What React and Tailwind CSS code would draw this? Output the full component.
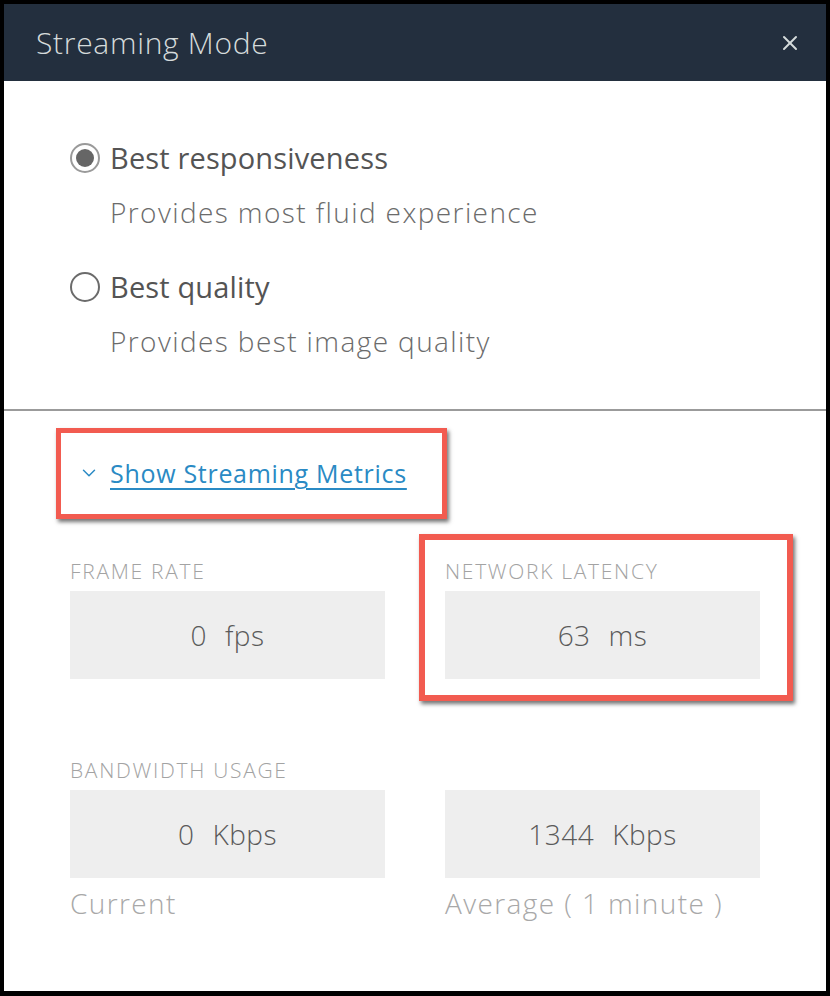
import { ChevronDown, X } from "lucide-react";

const font = { fontFamily: "'Open Sans', 'Noto Sans', sans-serif" };

const Radio = ({ checked, label, hint, className = "" }) => (
  <div className={className}>
    <div className="flex items-center h-9">
      <span
        className={`w-[30px] h-[30px] rounded-full border-2 flex items-center justify-center mr-[10px] ${
          checked ? "border-[#9a9a9a]" : "border-[#6b6b6b]"
        }`}
      >
        {checked && <span className="w-[18px] h-[18px] rounded-full bg-[#666]" />}
      </span>
      <span className="text-[29px] leading-9 text-[#545454] tracking-[0.15px]">{label}</span>
    </div>
    <div className="pl-10 mt-[19px] text-[28px] leading-[34px] text-[#6b6b6b] font-light tracking-[1.4px]">
      {hint}
    </div>
  </div>
);

const Label = ({ children }) => (
  <div className="h-[26px] text-[21px] leading-[26px] text-[#a3a3a3] uppercase font-light tracking-[1.7px]">
    {children}
  </div>
);

const Value = ({ value, unit }) => (
  <div className="mt-[7px] h-[88px] bg-[#eeeeee] flex items-center justify-center text-[28px] text-[#5a5a5a] font-light gap-[18px] tracking-[0.5px]">
    <span>{value}</span>
    <span>{unit}</span>
  </div>
);

const Foot = ({ children }) => (
  <div className="mt-[9px] text-[28px] leading-[32px] text-[#a8a8a8] font-light tracking-[1.4px]">
    {children}
  </div>
);

export default function App() {
  return (
    <div
      className="w-[830px] h-[996px] bg-black pt-1 pl-1 pr-1 pb-[5px]"
      style={font}
    >
      <div className="w-full h-full bg-white flex flex-col">
        {/* Header */}
        <div className="h-[77px] bg-[#232f3e] flex items-center justify-between pl-8 pr-6">
          <h1 className="text-[30px] font-light text-[#d5dbdb] tracking-[0.7px]">Streaming Mode</h1>
          <X className="w-6 h-6 text-[#d5dbdb]" strokeWidth={2} />
        </div>

        {/* Modes */}
        <div className="pl-[66px] pt-[59px]">
          <Radio checked label="Best responsiveness" hint="Provides most fluid experience" />
          <Radio
            className="mt-10"
            label="Best quality"
            hint="Provides best image quality"
          />
        </div>

        <div className="mt-[51px] h-[2px] bg-[#9b9b9b]" />

        {/* Metrics toggle */}
        <div className="relative mt-[46px] pl-[74px] flex items-center h-8">
          <ChevronDown className="w-[22px] h-[22px] text-[#2a8ac4] mr-[10px]" strokeWidth={1.6} />
          <a className="text-[25px] leading-8 text-[#2a8ac4] underline underline-offset-[5px] decoration-[2px] tracking-[0.7px]">
            Show Streaming Metrics
          </a>
          <div className="absolute left-[52px] top-[-29px] w-[391px] h-[91px] border-[5px] border-[#f25b50] shadow-[2px_3px_4px_rgba(0,0,0,0.55)]" />
        </div>

        {/* Metrics */}
        <div className="mt-[69px] px-[66px] grid grid-cols-2 gap-x-[60px]">
          <div>
            <Label>Frame rate</Label>
            <Value value="0" unit="fps" />
          </div>
          <div className="relative">
            <Label>Network latency</Label>
            <Value value="63" unit="ms" />
            <div className="absolute left-[-26px] top-[-24px] w-[374px] h-[167px] border-[6px] border-[#f25b50] shadow-[2px_3px_4px_rgba(0,0,0,0.55)]" />
          </div>
        </div>

        <div className="mt-[78px] px-[66px] grid grid-cols-2 gap-x-[60px]">
          <div>
            <Label>Bandwidth usage</Label>
            <Value value="0" unit="Kbps" />
            <Foot>Current</Foot>
          </div>
          <div>
            <div className="h-[26px]" />
            <Value value="1344" unit="Kbps" />
            <Foot>Average ( 1 minute )</Foot>
          </div>
        </div>
      </div>
    </div>
  );
}
